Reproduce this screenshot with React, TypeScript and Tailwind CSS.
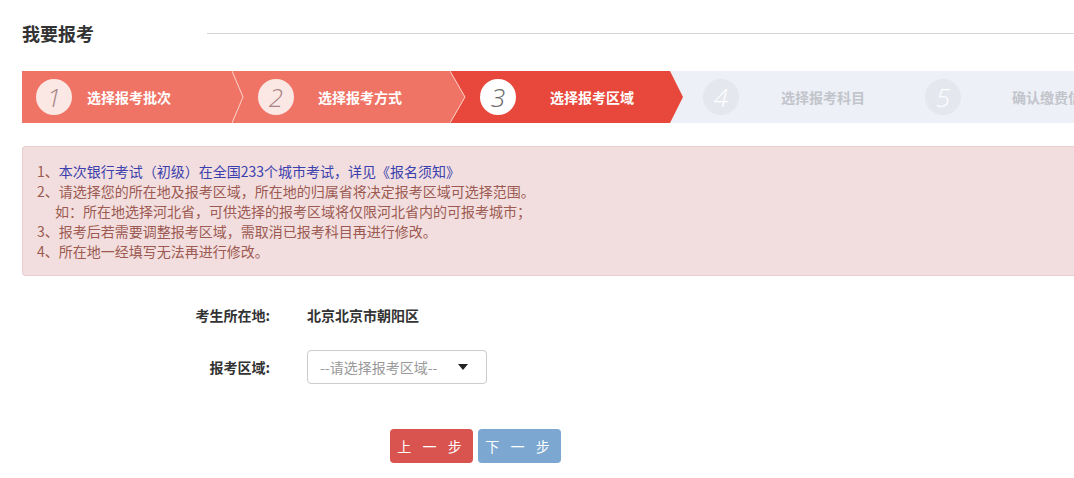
import React from "react";

type Step = {
  n: string;
  label: string;
  boxCls: string;
  circleCls: string;
  numCls: string;
  textCls: string;
};

function Circle({ n, circleCls, numCls }: { n: string; circleCls: string; numCls: string }) {
  return (
    <div className={"flex h-[36px] w-[36px] shrink-0 items-center justify-center rounded-full " + circleCls}>
      <span className={"font-['Open_Sans',sans-serif] text-[26px] font-light italic leading-none " + numCls}>{n}</span>
    </div>
  );
}

export default function App() {
  const steps: Step[] = [
    {
      n: "1",
      label: "选择报考批次",
      boxCls: "w-[210px] bg-[#f07466] pl-[14px]",
      circleCls: "bg-[#fbe8e4]",
      numCls: "text-[#a88486]",
      textCls: "ml-[15px] text-white",
    },
    {
      n: "2",
      label: "选择报考方式",
      boxCls: "w-[218px] bg-[#f07466] pl-[26px]",
      circleCls: "bg-[#fbe8e4]",
      numCls: "text-[#a88486]",
      textCls: "ml-[24px] text-white",
    },
    {
      n: "3",
      label: "选择报考区域",
      boxCls: "w-[220px] bg-[#e8483b] pl-[30px]",
      circleCls: "bg-white",
      numCls: "text-[#666]",
      textCls: "ml-[34px] text-white",
    },
    {
      n: "4",
      label: "选择报考科目",
      boxCls: "w-[222px] bg-[#edf0f6] pl-[33px]",
      circleCls: "bg-[#e4e7ee]",
      numCls: "text-white",
      textCls: "ml-[42px] text-[#c2c4cb]",
    },
    {
      n: "5",
      label: "确认缴费信息",
      boxCls: "flex-1 bg-[#edf0f6] pl-[33px]",
      circleCls: "bg-[#e4e7ee]",
      numCls: "text-white",
      textCls: "ml-[51px] text-[#c2c4cb]",
    },
  ];

  return (
    <div className="h-[478px] w-[1074px] overflow-hidden bg-white pl-[22px] pt-[21px] font-['Noto_Sans_CJK_SC',sans-serif] text-[14px]">
      {/* Title */}
      <div className="flex h-[24px] items-center">
        <h1 className="text-[18px] font-bold leading-[24px] text-[#333]">我要报考</h1>
        <div className="ml-[113px] h-px flex-1 bg-[#d6d6d6]" />
      </div>

      {/* Steps */}
      <div className="mt-[26px] flex h-[52px] overflow-hidden">
        {steps.map((s, i) => (
          <div key={s.n} className={"relative flex h-full shrink-0 items-center " + s.boxCls}>
            {i === 1 && (
              <svg className="absolute left-0 top-0" width="13" height="52" viewBox="0 0 13 52">
                <polyline points="0,0 11,26 0,52" fill="none" stroke="#fcd3cb" strokeWidth="1" />
              </svg>
            )}
            {i === 2 && (
              <>
                <svg className="absolute left-0 top-0" width="16" height="52" viewBox="0 0 16 52">
                  <polygon points="0,0 15,26 0,52" fill="#f07466" />
                  <polyline points="0,0 15,26 0,52" fill="none" stroke="#fcd3cb" strokeWidth="1" />
                </svg>
                <svg className="absolute right-[-13px] top-0 z-10" width="13" height="52" viewBox="0 0 13 52">
                  <polygon points="0,0 13,26 0,52" fill="#e8483b" />
                </svg>
              </>
            )}
            <Circle n={s.n} circleCls={s.circleCls} numCls={s.numCls} />
            <span className={"whitespace-nowrap text-[14px] font-bold " + s.textCls}>{s.label}</span>
          </div>
        ))}
      </div>

      {/* Notice */}
      <div className="mt-[23px] rounded-l-[4px] border border-r-0 border-[#ebccd1] bg-[#f2dede] py-[14px] pl-[14px] text-[14px] leading-[20px] text-[#9c5a52]">
        <p>
          1、<span className="text-[#3b3fae]">本次银行考试（初级）在全国233个城市考试，详见《报名须知》</span>
        </p>
        <p>2、请选择您的所在地及报考区域，所在地的归属省将决定报考区域可选择范围。</p>
        <p className="pl-[18px]">如：所在地选择河北省，可供选择的报考区域将仅限河北省内的可报考城市；</p>
        <p>3、报考后若需要调整报考区域，需取消已报考科目再进行修改。</p>
        <p>4、所在地一经填写无法再进行修改。</p>
      </div>

      {/* Form */}
      <div className="mt-[22px] flex h-[34px] items-center">
        <div className="w-[248px] text-right text-[14px] font-bold text-[#333]">考生所在地:</div>
        <div className="ml-[37px] text-[14px] font-bold text-[#333]">北京北京市朝阳区</div>
      </div>
      <div className="mt-[18px] flex h-[34px] items-center">
        <div className="w-[248px] text-right text-[14px] font-bold text-[#333]">报考区域:</div>
        <div className="ml-[37px] flex h-[34px] w-[180px] items-center justify-between rounded-[4px] border border-[#ccc] bg-white pl-[12px] pr-[18px]">
          <span className="text-[14px] text-[#999]">--请选择报考区域--</span>
          <svg width="10" height="6" viewBox="0 0 10 6">
            <polygon points="0,0 10,0 5,6" fill="#222" />
          </svg>
        </div>
      </div>

      {/* Buttons */}
      <div className="mt-[45px] flex gap-[5px] pl-[368px]">
        <button className="h-[34px] w-[83px] rounded-[4px] bg-[#d9534f] text-[14px] tracking-[4px] text-white">
          上 一 步
        </button>
        <button className="h-[34px] w-[83px] rounded-[4px] bg-[#7ba7d0] text-[14px] tracking-[4px] text-white">
          下 一 步
        </button>
      </div>
    </div>
  );
}
